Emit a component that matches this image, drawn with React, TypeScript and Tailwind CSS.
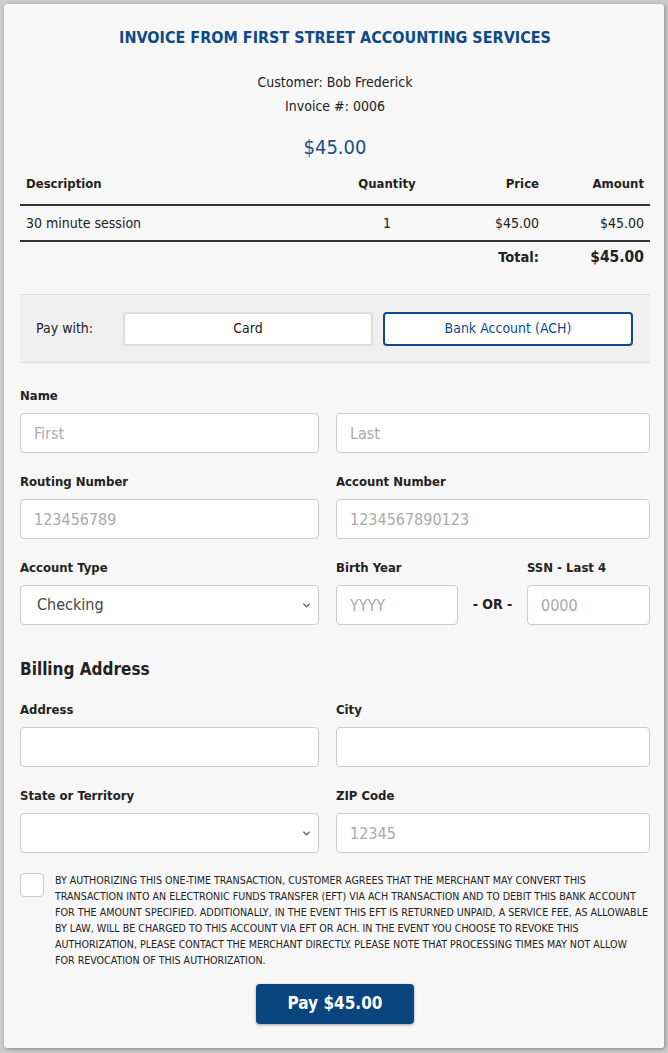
import { ChevronDown } from 'lucide-react';

const font = "font-['DejaVu_Sans_Condensed','Liberation_Sans_Narrow','Liberation_Sans',sans-serif]";

function Field({ label, placeholder }: { label: string; placeholder?: string }) {
  return (
    <div>
      <label className="block h-5 pt-px text-[13px] leading-5 font-bold text-[#222]">{label}</label>
      <input
        className="mt-2 block h-10 w-full rounded border border-[#cccccc] bg-white px-[13px] text-[16px] text-[#444] placeholder:text-[#aaaaaa] outline-none"
        placeholder={placeholder}
      />
    </div>
  );
}

function Select({ label, value }: { label: string; value: string }) {
  return (
    <div>
      <label className="block h-5 pt-px text-[13px] leading-5 font-bold text-[#222]">{label}</label>
      <div className="relative mt-2 h-10">
        <select className="block h-10 w-full appearance-none rounded border border-[#cccccc] bg-white pl-4 pr-8 text-[16px] text-[#444] outline-none">
          <option>{value}</option>
        </select>
        <ChevronDown className="pointer-events-none absolute right-[7px] top-[15px] h-[11px] w-[11px] text-[#555]" strokeWidth={3} />
      </div>
    </div>
  );
}

export default function App() {
  return (
    <div className={`min-h-screen bg-[#cccccc] pt-1 pl-1 pr-1 pb-[6px] ${font}`}>
      <div className="rounded-[3px] bg-[#f7f7f7] pl-4 pr-[14px] pt-[22px] pb-6 shadow-[1px_1px_4px_rgba(0,0,0,0.35)]">
        <h1 className="text-center text-[16px] leading-6 font-bold text-[#0d4a87]">
          INVOICE FROM FIRST STREET ACCOUNTING SERVICES
        </h1>
        <div className="mt-5 text-center text-[14px] leading-6 text-[#222]">
          <div>Customer: Bob Frederick</div>
          <div>Invoice #: 0006</div>
        </div>
        <div className="mt-[15px] text-center text-[20px] leading-7 text-[#1a4f8a]">$45.00</div>

        <div className="mt-[3px] text-[14px] text-[#222]">
          <div className="grid h-[42px] grid-cols-[1fr_90px_107px_105px] items-center border-b-2 border-[#333] px-1.5 text-[13px] font-bold">
            <div>Description</div>
            <div className="text-center">Quantity</div>
            <div className="text-right">Price</div>
            <div className="text-right">Amount</div>
          </div>
          <div className="grid h-[36px] grid-cols-[1fr_90px_107px_105px] items-center border-b-2 border-[#333] px-1.5">
            <div>30 minute session</div>
            <div className="text-center">1</div>
            <div className="text-right">$45.00</div>
            <div className="text-right">$45.00</div>
          </div>
          <div className="grid h-8 grid-cols-[1fr_90px_107px_105px] items-center px-1.5 font-bold">
            <div />
            <div />
            <div className="text-right text-[14.5px]">Total:</div>
            <div className="text-right text-[15.5px]">$45.00</div>
          </div>
        </div>

        <div className="mt-5 flex h-[69px] items-center border-y border-[#dddddd] bg-[#efefef] pl-4 pr-[17px]">
          <div className="w-[87px] text-[14px] text-[#222]">Pay with:</div>
          <div className="grid flex-1 grid-cols-2 gap-[10px]">
            <button className="h-[34px] rounded border-2 border-[#dddddd] bg-white text-[14px] text-[#222]">Card</button>
            <button className="h-[34px] rounded border-2 border-[#0d4a87] bg-white text-[14px] text-[#0d4a87]">
              Bank Account (ACH)
            </button>
          </div>
        </div>

        <div className="mt-[22px] grid grid-cols-[299px_1fr] gap-x-[17px] gap-y-[18px]">
          <div>
            <label className="block h-5 pt-px text-[13px] leading-5 font-bold text-[#222]">Name</label>
            <input
              className="mt-2 block h-10 w-full rounded border border-[#cccccc] bg-white px-[13px] text-[16px] placeholder:text-[#aaaaaa] outline-none"
              placeholder="First"
            />
          </div>
          <div>
            <div className="h-5" />
            <input
              className="mt-2 block h-10 w-full rounded border border-[#cccccc] bg-white px-[13px] text-[16px] placeholder:text-[#aaaaaa] outline-none"
              placeholder="Last"
            />
          </div>
          <Field label="Routing Number" placeholder="123456789" />
          <Field label="Account Number" placeholder="1234567890123" />
          <Select label="Account Type" value="Checking" />
          <div className="grid grid-cols-[122px_1fr_123px]">
            <Field label="Birth Year" placeholder="YYYY" />
            <div className="flex items-end justify-center pb-[10px] text-[14px] font-bold text-[#222]">- OR -</div>
            <Field label="SSN - Last 4" placeholder="0000" />
          </div>
        </div>

        <h2 className="mt-8 text-[17px] leading-6 font-bold text-[#222]">Billing Address</h2>

        <div className="mt-[18px] grid grid-cols-[299px_1fr] gap-x-[17px] gap-y-[18px]">
          <Field label="Address" />
          <Field label="City" />
          <Select label="State or Territory" value="" />
          <Field label="ZIP Code" placeholder="12345" />
        </div>

        <div className="mt-[19px] flex gap-[11px]">
          <div className="mt-px h-6 w-6 shrink-0 rounded border border-[#cccccc] bg-white" />
          <p className="text-[10.6px] leading-4 text-[#222]">
            BY AUTHORIZING THIS ONE-TIME TRANSACTION, CUSTOMER AGREES THAT THE MERCHANT MAY CONVERT THIS
            <br />
            TRANSACTION INTO AN ELECTRONIC FUNDS TRANSFER (EFT) VIA ACH TRANSACTION AND TO DEBIT THIS BANK ACCOUNT
            <br />
            FOR THE AMOUNT SPECIFIED. ADDITIONALLY, IN THE EVENT THIS EFT IS RETURNED UNPAID, A SERVICE FEE, AS ALLOWABLE
            <br />
            BY LAW, WILL BE CHARGED TO THIS ACCOUNT VIA EFT OR ACH. IN THE EVENT YOU CHOOSE TO REVOKE THIS
            <br />
            AUTHORIZATION, PLEASE CONTACT THE MERCHANT DIRECTLY. PLEASE NOTE THAT PROCESSING TIMES MAY NOT ALLOW
            <br />
            FOR REVOCATION OF THIS AUTHORIZATION.
          </p>
        </div>

        <div className="mt-4 flex justify-center">
          <button className="h-10 w-[158px] rounded bg-[#0b4580] text-[17px] font-bold text-white shadow-[0_1px_3px_rgba(0,0,0,0.35)]">
            Pay $45.00
          </button>
        </div>
      </div>
    </div>
  );
}
